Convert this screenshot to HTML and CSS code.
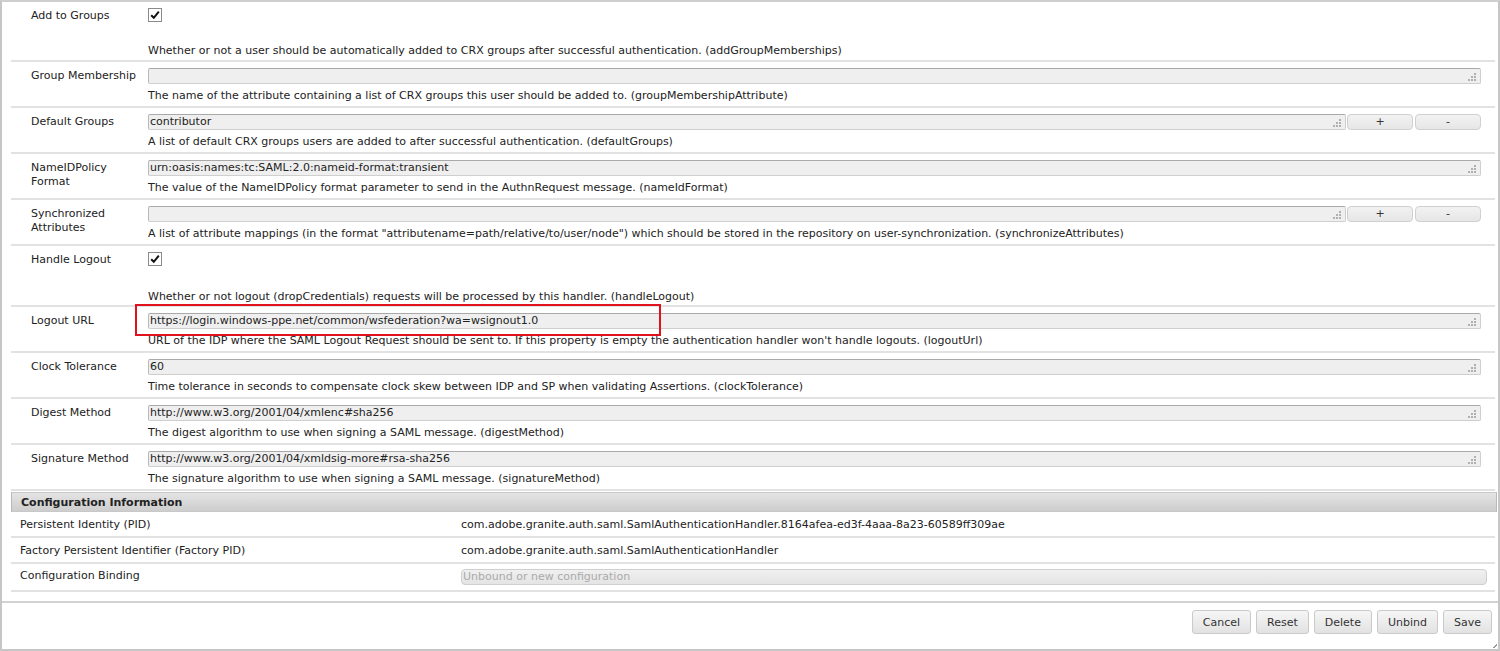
FILE: index.html
```html
<!DOCTYPE html>
<html>
<head>
<meta charset="utf-8">
<link rel="stylesheet" href="styles.css">
</head>
<body>
<div class="dialog">
  <div class="form">
    <div class="row row-check row-first">
      <div class="label">Add to Groups</div>
      <div class="value">
        <span class="checkbox"><svg width="14" height="14" viewBox="0 0 14 14"><rect x="0.5" y="0.5" width="13" height="13" fill="#fff" stroke="#8a8a8a"/><path d="M3.2 7.2 L5.8 9.8 L10.8 3.6" fill="none" stroke="#111" stroke-width="2"/></svg></span>
        <div class="desc">Whether or not a user should be automatically added to CRX groups after successful authentication. (addGroupMemberships)</div>
      </div>
    </div>
    <div class="row">
      <div class="label">Group Membership</div>
      <div class="value">
        <div class="field"><span class="input"><span class="txt"></span><span class="grip"></span></span></div>
        <div class="desc">The name of the attribute containing a list of CRX groups this user should be added to. (groupMembershipAttribute)</div>
      </div>
    </div>
    <div class="row">
      <div class="label">Default Groups</div>
      <div class="value">
        <div class="field"><span class="input"><span class="txt">contributor</span><span class="grip"></span></span><button class="pm">+</button><button class="pm">-</button></div>
        <div class="desc">A list of default CRX groups users are added to after successful authentication. (defaultGroups)</div>
      </div>
    </div>
    <div class="row">
      <div class="label">NameIDPolicy<br>Format</div>
      <div class="value">
        <div class="field"><span class="input"><span class="txt">urn:oasis:names:tc:SAML:2.0:nameid-format:transient</span><span class="grip"></span></span></div>
        <div class="desc">The value of the NameIDPolicy format parameter to send in the AuthnRequest message. (nameIdFormat)</div>
      </div>
    </div>
    <div class="row">
      <div class="label">Synchronized<br>Attributes</div>
      <div class="value">
        <div class="field"><span class="input"><span class="txt"></span><span class="grip"></span></span><button class="pm">+</button><button class="pm">-</button></div>
        <div class="desc">A list of attribute mappings (in the format "attributename=path/relative/to/user/node") which should be stored in the repository on user-synchronization. (synchronizeAttributes)</div>
      </div>
    </div>
    <div class="row row-check">
      <div class="label">Handle Logout</div>
      <div class="value">
        <span class="checkbox"><svg width="14" height="14" viewBox="0 0 14 14"><rect x="0.5" y="0.5" width="13" height="13" fill="#fff" stroke="#8a8a8a"/><path d="M3.2 7.2 L5.8 9.8 L10.8 3.6" fill="none" stroke="#111" stroke-width="2"/></svg></span>
        <div class="desc">Whether or not logout (dropCredentials) requests will be processed by this handler. (handleLogout)</div>
      </div>
    </div>
    <div class="row">
      <div class="label">Logout URL</div>
      <div class="value">
        <div class="field"><span class="input"><span class="txt">https://login.windows-ppe.net/common/wsfederation?wa=wsignout1.0</span><span class="grip"></span></span></div>
        <div class="desc">URL of the IDP where the SAML Logout Request should be sent to. If this property is empty the authentication handler won't handle logouts. (logoutUrl)</div>
      </div>
    </div>
    <div class="row">
      <div class="label">Clock Tolerance</div>
      <div class="value">
        <div class="field"><span class="input"><span class="txt">60</span><span class="grip"></span></span></div>
        <div class="desc">Time tolerance in seconds to compensate clock skew between IDP and SP when validating Assertions. (clockTolerance)</div>
      </div>
    </div>
    <div class="row">
      <div class="label">Digest Method</div>
      <div class="value">
        <div class="field"><span class="input"><span class="txt">http://www.w3.org/2001/04/xmlenc#sha256</span><span class="grip"></span></span></div>
        <div class="desc">The digest algorithm to use when signing a SAML message. (digestMethod)</div>
      </div>
    </div>
    <div class="row">
      <div class="label">Signature Method</div>
      <div class="value">
        <div class="field"><span class="input"><span class="txt">http://www.w3.org/2001/04/xmldsig-more#rsa-sha256</span><span class="grip"></span></span></div>
        <div class="desc">The signature algorithm to use when signing a SAML message. (signatureMethod)</div>
      </div>
    </div>
  </div>

  <div class="config">
    <div class="config-head">Configuration Information</div>
    <div class="crow">
      <div class="clabel">Persistent Identity (PID)</div>
      <div class="cval">com.adobe.granite.auth.saml.SamlAuthenticationHandler.8164afea-ed3f-4aaa-8a23-60589ff309ae</div>
    </div>
    <div class="crow">
      <div class="clabel">Factory Persistent Identifier (Factory PID)</div>
      <div class="cval">com.adobe.granite.auth.saml.SamlAuthenticationHandler</div>
    </div>
    <div class="crow crow-select">
      <div class="clabel">Configuration Binding</div>
      <div class="cval"><span class="select">Unbound or new configuration</span></div>
    </div>
  </div>

  <div class="footer">
    <button class="btn">Cancel</button>
    <button class="btn">Reset</button>
    <button class="btn">Delete</button>
    <button class="btn">Unbind</button>
    <button class="btn">Save</button>
  </div>

  <div class="highlight"></div>
  <span class="corner"></span>
</div>
</body>
</html>
```

FILE: styles.css
```css
html, body {
  margin: 0;
  padding: 0;
  background: #fff;
}
body {
  font-family: "DejaVu Sans", Tahoma, sans-serif;
  font-size: 11px;
  line-height: 14px;
  color: #222;
}
.dialog {
  position: relative;
  width: 1500px;
  height: 651px;
  box-sizing: border-box;
  border-left: 2px solid #c6c6c6;
  border-right: 2px solid #c6c6c6;
  border-top: 2px solid #cfcfcf;
  border-bottom: 2px solid #c6c6c6;
  display: flex;
  flex-direction: column;
}
.form {
  margin: 0 3px 0 9px;
}
.row {
  display: grid;
  grid-template-columns: 137px 1fr;
  border-bottom: 2px solid #e2e2e2;
}
.label {
  padding: 7px 0 0 20px;
}
.value {
  padding: 6px 0 3px 0;
}
.row-check .label {
  padding-top: 7px;
}
.row-check .value {
  padding: 6px 0 1px 0;
}
.row-first .value {
  padding-bottom: 2px;
}
.checkbox {
  display: block;
  width: 14px;
  height: 14px;
  line-height: 0;
}
.row-check .desc {
  margin-top: 24px;
}
.row-first .desc {
  margin-top: 22px;
}
.field {
  display: flex;
  height: 16px;
  margin-right: 14px;
}
.input {
  flex: 1;
  position: relative;
  box-sizing: border-box;
  height: 16px;
  background: #efefef;
  border: 1px solid #cfcfcf;
  border-top-color: #a9a9a9;
  border-left-color: #b9b9b9;
  border-radius: 2px;
  display: flex;
  align-items: center;
}
.txt {
  padding-left: 1px;
  color: #222;
  white-space: nowrap;
  line-height: 14px;
}
.grip {
  position: absolute;
  right: 4px;
  bottom: 2px;
  width: 8px;
  height: 8px;
  background:
    linear-gradient(#b0b0b0, #b0b0b0) 6px 0 / 2px 2px no-repeat,
    linear-gradient(#b0b0b0, #b0b0b0) 3px 3px / 2px 2px no-repeat,
    linear-gradient(#b0b0b0, #b0b0b0) 6px 3px / 2px 2px no-repeat,
    linear-gradient(#b0b0b0, #b0b0b0) 0 6px / 2px 2px no-repeat,
    linear-gradient(#b0b0b0, #b0b0b0) 3px 6px / 2px 2px no-repeat,
    linear-gradient(#b0b0b0, #b0b0b0) 6px 6px / 2px 2px no-repeat;
}
.pm {
  width: 66px;
  height: 16px;
  margin-left: 1px;
  padding: 0;
  box-sizing: border-box;
  border: 1px solid #d0d0d0;
  border-radius: 4px;
  background: linear-gradient(#f2f2f2, #e6e6e6);
  font-family: inherit;
  font-size: 11px;
  line-height: 14px;
  color: #333;
}
.pm + .pm {
  margin-left: 2px;
}
.desc {
  margin-top: 5px;
  white-space: nowrap;
}
.config {
  margin: 1px 3px 0 9px;
}
.config-head {
  height: 20px;
  box-sizing: border-box;
  background: linear-gradient(#e4e4e4, #cdcdcd);
  border: 1px solid #c8c8c8;
  border-right-color: #b8b8b8;
  border-left-color: #b8b8b8;
  margin-right: -2px;
  padding: 3px 0 0 9px;
  font-weight: bold;
  color: #222;
}
.crow {
  display: grid;
  grid-template-columns: 450px 1fr;
  border-bottom: 2px solid #e2e2e2;
  padding: 6px 0 4px 0;
}
.crow + .crow {
  padding: 6px 0 4px 0;
}
.crow-select {
  padding: 6px 0 4px 0;
}
.crow + .crow-select {
  padding: 5px 0 5px 0;
}
.clabel {
  padding-left: 9px;
}
.select {
  display: block;
  box-sizing: border-box;
  height: 16px;
  margin-right: 8px;
  background: linear-gradient(#f0f0f0, #e4e4e4);
  border: 1px solid #cfcfcf;
  border-radius: 4px;
  color: #aaa;
  padding-left: 1px;
  line-height: 14px;
}
.footer {
  margin-top: 9px;
  border-top: 2px solid #d2d2d2;
  display: flex;
  justify-content: flex-end;
  gap: 5px;
  padding: 7px 6px 0 0;
}
.btn {
  height: 24px;
  box-sizing: border-box;
  padding: 0 10px;
  border: 1px solid #cacaca;
  border-radius: 3px;
  background: linear-gradient(#f6f6f6, #e2e2e2);
  font-family: inherit;
  font-size: 11px;
  color: #333;
}
.highlight {
  position: absolute;
  left: 133px;
  top: 302px;
  width: 526px;
  height: 32px;
  box-sizing: border-box;
  border: 2px solid #e0121d;
}
.corner {
  position: absolute;
  right: 1px;
  bottom: 1px;
  width: 4px;
  height: 4px;
  background: linear-gradient(135deg, transparent 50%, #999 50%, #999 65%, transparent 65%);
}
```
